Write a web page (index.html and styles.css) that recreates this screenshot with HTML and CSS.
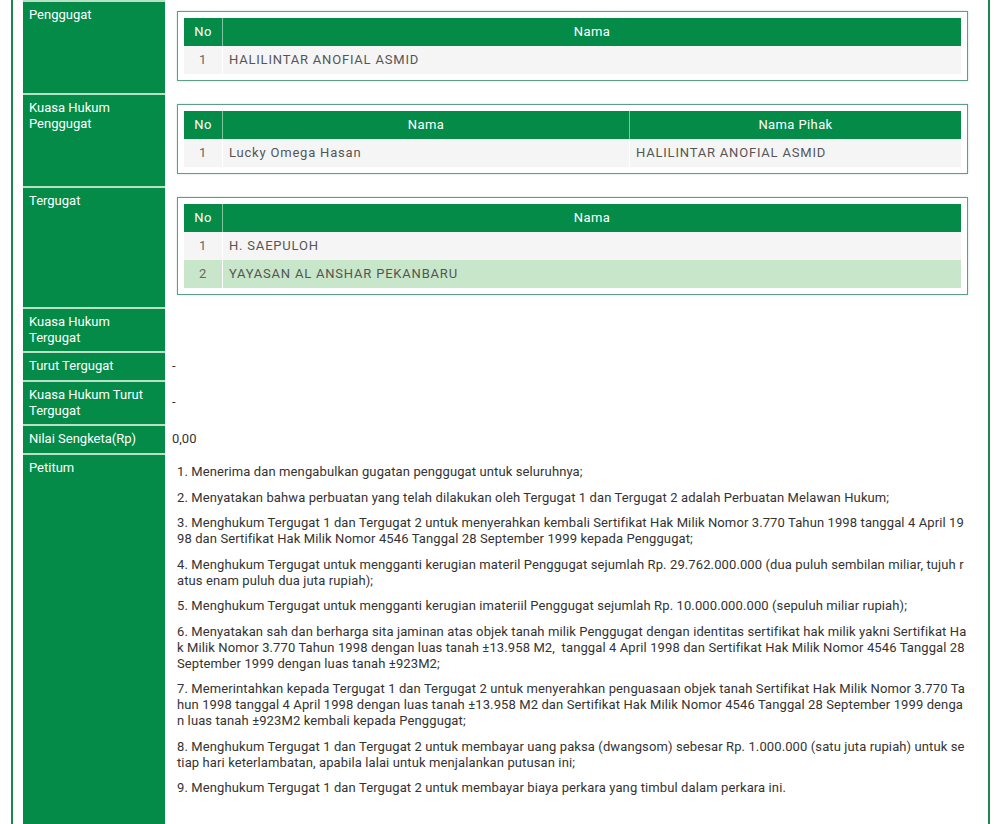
FILE: index.html
```html
<!DOCTYPE html>
<html lang="id">
<head>
    <meta charset="UTF-8">
    <meta name="viewport" content="width=device-width, initial-scale=1.0">
    <title>Detail Perkara</title>
    <link rel="stylesheet" href="styles.css">
</head>
<body>
    <div class="panel">
        <div class="detail">
            <div class="label">Penggugat</div>
            <div class="value boxed">
                <div class="party-box">
                    <table class="party">
                        <tr><th class="no">No</th><th>Nama</th></tr>
                        <tr><td class="no">1</td><td>HALILINTAR ANOFIAL ASMID</td></tr>
                    </table>
                </div>
            </div>

            <div class="label">Kuasa Hukum Penggugat</div>
            <div class="value boxed">
                <div class="party-box">
                    <table class="party">
                        <tr><th class="no">No</th><th class="half">Nama</th><th>Nama Pihak</th></tr>
                        <tr><td class="no">1</td><td>Lucky Omega Hasan</td><td>HALILINTAR ANOFIAL ASMID</td></tr>
                    </table>
                </div>
            </div>

            <div class="label">Tergugat</div>
            <div class="value boxed">
                <div class="party-box">
                    <table class="party">
                        <tr><th class="no">No</th><th>Nama</th></tr>
                        <tr><td class="no">1</td><td>H. SAEPULOH</td></tr>
                        <tr class="hl"><td class="no">2</td><td>YAYASAN AL ANSHAR PEKANBARU</td></tr>
                    </table>
                </div>
            </div>

            <div class="label">Kuasa Hukum Tergugat</div>
            <div class="value"></div>

            <div class="label">Turut Tergugat</div>
            <div class="value">-</div>

            <div class="label">Kuasa Hukum Turut Tergugat</div>
            <div class="value mid">-</div>

            <div class="label">Nilai Sengketa(Rp)</div>
            <div class="value">0,00</div>

            <div class="label">Petitum</div>
            <div class="value petitum">
                <p>1. Menerima dan mengabulkan gugatan penggugat untuk seluruhnya;</p>
                <p>2. Menyatakan bahwa perbuatan yang telah dilakukan oleh Tergugat 1 dan Tergugat 2 adalah Perbuatan Melawan Hukum;</p>
                <p>3. Menghukum Tergugat 1 dan Tergugat 2 untuk menyerahkan kembali Sertifikat Hak Milik Nomor 3.770 Tahun 1998 tanggal 4 April 1998 dan Sertifikat Hak Milik Nomor 4546 Tanggal 28 September 1999 kepada Penggugat;</p>
                <p>4. Menghukum Tergugat untuk mengganti kerugian materil Penggugat sejumlah Rp. 29.762.000.000 (dua puluh sembilan miliar, tujuh ratus enam puluh dua juta rupiah);</p>
                <p>5. Menghukum Tergugat untuk mengganti kerugian imateriil Penggugat sejumlah Rp. 10.000.000.000 (sepuluh miliar rupiah);</p>
                <p>6. Menyatakan sah dan berharga sita jaminan atas objek tanah milik Penggugat dengan identitas sertifikat hak milik yakni Sertifikat Hak Milik Nomor 3.770 Tahun 1998 dengan luas tanah ±13.958 M2,&nbsp; tanggal 4 April 1998 dan Sertifikat Hak Milik Nomor 4546 Tanggal 28 September 1999 dengan luas tanah ±923M2;</p>
                <p>7. Memerintahkan kepada Tergugat 1 dan Tergugat 2 untuk menyerahkan penguasaan objek tanah Sertifikat Hak Milik Nomor 3.770 Tahun 1998 tanggal 4 April 1998 dengan luas tanah ±13.958 M2 dan Sertifikat Hak Milik Nomor 4546 Tanggal 28 September 1999 dengan luas tanah ±923M2 kembali kepada Penggugat;</p>
                <p>8. Menghukum Tergugat 1 dan Tergugat 2 untuk membayar uang paksa (dwangsom) sebesar Rp. 1.000.000 (satu juta rupiah) untuk setiap hari keterlambatan, apabila lalai untuk menjalankan putusan ini;</p>
                <p>9. Menghukum Tergugat 1 dan Tergugat 2 untuk membayar biaya perkara yang timbul dalam perkara ini.</p>
            </div>
        </div>
    </div>
</body>
</html>
```

FILE: styles.css
```css
body {
    margin: 0;
    font-family: Roboto, "Liberation Sans", Arial, sans-serif;
    font-size: 13px;
    line-height: 16px;
    color: #333;
    background-color: #fff;
}

.panel {
    margin: 0 10px 0 11px;
    padding: 0 10px;
    border-left: 2px solid #1a8a4c;
    border-right: 2px solid #1a8a4c;
    min-height: 900px;
}

.detail {
    display: grid;
    grid-template-columns: 142px 1fr;
}

.label {
    background-color: #048b48;
    color: #fff;
    padding: 5px 6px 5px;
    border-top: 2px solid #b9e0c6;
}

.value {
    padding: 5px 10px 6px 7px;
    border-top: 2px solid transparent;
}

.value.mid {
    padding-top: 12px;
}

.value.boxed {
    padding: 9px 10px 12px 12px;
}

.party-box {
    border: 1px solid #5c9f86;
    padding: 6px;
    box-shadow: 0 0 2px rgba(80, 160, 130, 0.35);
}

.party {
    width: 100%;
    border-collapse: collapse;
    letter-spacing: 0.8px;
}

.party th {
    background-color: #048b48;
    color: #fff;
    font-weight: 400;
    letter-spacing: 0.4px;
    padding: 6px 7px;
    border-left: 1px solid #7fc59f;
    text-align: center;
}

.party th:first-child {
    border-left: none;
}

.party td {
    background-color: #f5f5f5;
    color: #555;
    padding: 6px 6px;
    border-left: 1px solid #fff;
}

.party td:first-child {
    border-left: none;
}

.party .no {
    width: 24px;
    text-align: center;
    color: #666;
}

.party th.no {
    color: #fff;
}

.party .half {
    width: 392px;
}

.party tr.hl td {
    background-color: #c8e6c9;
}

.petitum {
    padding: 9px 10px 40px 12px;
    word-break: break-all;
    letter-spacing: 0.11px;
    color: #333;
}

.petitum p {
    margin: 0 0 9.5px;
}
```
